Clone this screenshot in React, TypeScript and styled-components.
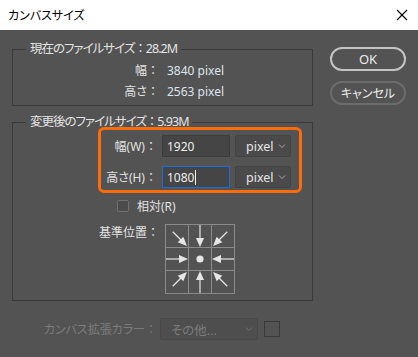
import React from "react";
import styled, { createGlobalStyle } from "styled-components";

const Global = createGlobalStyle`
  html, body { margin: 0; padding: 0; background: #535353; }
  body {
    font-family: "Noto Sans", "Noto Sans CJK JP", sans-serif;
    font-feature-settings: "palt" 1;
    font-size: 12px;
    color: #e2e2e2;
  }
  * { box-sizing: border-box; }
`;

const Window = styled.div`
  width: 418px;
  height: 357px;
  background: #535353;
  display: flex;
  flex-direction: column;
`;

const TitleBar = styled.div`
  height: 30px;
  background: #ffffff;
  color: #000;
  display: flex;
  align-items: center;
  justify-content: space-between;
  padding: 0 10px 0 8px;
  font-size: 12px;
`;

const Body = styled.div`
  display: flex;
  padding: 10px 0 0 12px;
  gap: 17px;
`;

const MainCol = styled.div`
  width: 301px;
  display: flex;
  flex-direction: column;
`;

const Group = styled.fieldset<{ $mt?: number; $pb: number }>`
  margin: ${(p) => p.$mt ?? 0}px 0 0 0;
  padding: 0 0 ${(p) => p.$pb}px 0;
  min-width: 0;
  border: 1px solid #3a3a3a;
  border-radius: 0;
`;

const Legend = styled.legend`
  margin-left: 13px;
  padding: 0 4px;
  line-height: 18px;
  font-size: 12.5px;
  letter-spacing: -1px;
  color: #e4e4e4;
`;

const Colon = styled.span`
  font-feature-settings: normal;
`;

const InfoGrid = styled.div`
  display: grid;
  grid-template-columns: 146px auto;
  column-gap: 8px;
  padding-top: 2px;
`;

const InfoLabel = styled.div`
  text-align: right;
  line-height: 21px;
  white-space: nowrap;
`;

const InfoValue = styled.div`
  line-height: 21px;
  color: #dde4ec;
`;

const Highlight = styled.div`
  margin: -4px 0 0 85px;
  width: 204px;
  border: 3px solid #ff6c0a;
  border-radius: 6px;
  padding: 5px 8px 2px 2px;
  display: grid;
  grid-template-columns: 54px 68px 56px;
  column-gap: 5px;
  row-gap: 9px;
  align-items: center;
`;

const FieldLabel = styled.div`
  display: flex;
  justify-content: flex-end;
  white-space: nowrap;
`;

const TextInput = styled.div<{ $focus?: boolean }>`
  height: 22px;
  background: #454545;
  border: 1px solid ${(p) => (p.$focus ? "#1b6fd6" : "#3b3b3b")};
  display: flex;
  align-items: center;
  padding-left: 4px;
  color: #eeeeee;
`;

const Caret = styled.span`
  display: inline-block;
  width: 1px;
  height: 15px;
  background: #f0f0f0;
  margin-left: 1px;
`;

const Select = styled.div<{ $disabled?: boolean; $w: number }>`
  width: ${(p) => p.$w}px;
  height: 22px;
  background: ${(p) => (p.$disabled ? "#4e4e4e" : "#4a4a4a")};
  border: 1px solid ${(p) => (p.$disabled ? "#484848" : "#424242")};
  border-radius: 2px;
  display: flex;
  align-items: center;
  justify-content: space-between;
  padding: 0 4px 0 10px;
  font-size: 12.5px;
  color: ${(p) => (p.$disabled ? "#7c7c7c" : "#e6e6e6")};
`;

const CheckRow = styled.div`
  display: flex;
  align-items: center;
  gap: 8px;
  margin: 4px 0 0 104px;
  height: 17px;
`;

const CheckBox = styled.span`
  width: 12px;
  height: 12px;
  border: 1px solid #727272;
  background: #4b4b4b;
  border-radius: 2px;
`;

const AnchorRow = styled.div`
  display: flex;
  margin-top: 10px;
  gap: 6px;
`;

const AnchorLabel = styled.div`
  width: 146px;
  text-align: right;
  line-height: 18px;
`;

const AnchorGrid = styled.div`
  display: grid;
  grid-template-columns: repeat(3, 22px);
  grid-template-rows: repeat(3, 22px);
  gap: 1px;
  padding: 1px;
  background: #8a8a8a;
  width: 70px;
  height: 70px;
`;

const AnchorCell = styled.div`
  background: #535353;
  display: flex;
  align-items: center;
  justify-content: center;
`;

const ColorRow = styled.div`
  display: flex;
  align-items: center;
  margin-top: 17px;
  gap: 3px;
  color: #7c7c7c;
`;

const ColorLabel = styled.div`
  width: 145px;
  text-align: right;
  white-space: nowrap;
`;

const Swatch = styled.span`
  width: 16px;
  height: 16px;
  border: 1px solid #3a3a3a;
  background: #535353;
  margin-left: 3px;
`;

const ButtonCol = styled.div`
  display: flex;
  flex-direction: column;
  gap: 10px;
  padding-top: 7px;
`;

const Button = styled.button<{ $primary?: boolean }>`
  width: 76px;
  height: 24px;
  border-radius: 12px;
  border: 2px solid ${(p) => (p.$primary ? "#c4c4c4" : "#6c6c6c")};
  background: #535353;
  color: #ececec;
  font-family: "Noto Sans", "Noto Sans CJK JP", sans-serif;
  font-feature-settings: "palt" 1;
  font-size: ${(p) => (p.$primary ? 13 : 12)}px;
  padding: 0;
  display: flex;
  align-items: center;
  justify-content: center;
`;

const Chevron = ({ color = "#a8a8a8" }: { color?: string }) => (
  <svg width="8" height="6" viewBox="0 0 8 6">
    <polyline points="1,1.5 4,4.5 7,1.5" fill="none" stroke={color} strokeWidth="1" />
  </svg>
);

const CloseIcon = () => (
  <svg width="12" height="12" viewBox="0 0 12 12">
    <line x1="1" y1="1" x2="11" y2="11" stroke="#000" strokeWidth="1.1" />
    <line x1="11" y1="1" x2="1" y2="11" stroke="#000" strokeWidth="1.1" />
  </svg>
);

const Arrow = ({ angle, diag }: { angle: number; diag?: boolean }) => {
  const a = diag ? -6 : -11;
  const b = diag ? 14 : 11;
  const h = 9;
  return (
    <svg width="22" height="22" viewBox="-11 -11 22 22" overflow="visible">
      <g transform={`rotate(${angle})`}>
        <line x1="0" y1={a} x2="0" y2={b - h + 1} stroke="#e6e6e6" strokeWidth="1.2" />
        <polygon points={`-4,${b - h} 4,${b - h} 0,${b}`} fill="#e6e6e6" />
      </g>
    </svg>
  );
};

const Dot = () => (
  <svg width="22" height="22" viewBox="-11 -11 22 22">
    <circle cx="0" cy="0" r="3.6" fill="#e6e6e6" />
  </svg>
);

const anchors: { angle: number; diag?: boolean; dot?: boolean }[] = [
  { angle: -45, diag: true },
  { angle: 0 },
  { angle: 45, diag: true },
  { angle: -90 },
  { angle: 0, dot: true },
  { angle: 90 },
  { angle: -135, diag: true },
  { angle: 180 },
  { angle: 135, diag: true },
];

export default function App() {
  return (
    <Window>
      <Global />
      <TitleBar>
        <span>カンバスサイズ</span>
        <CloseIcon />
      </TitleBar>
      <Body>
        <MainCol>
          <Group $pb={3}>
            <Legend>
              現在のファイルサイズ<Colon>：</Colon>28.2M
            </Legend>
            <InfoGrid>
              <InfoLabel>
                幅<Colon>：</Colon>
              </InfoLabel>
              <InfoValue>3840 pixel</InfoValue>
              <InfoLabel>
                高さ<Colon>：</Colon>
              </InfoLabel>
              <InfoValue>2563 pixel</InfoValue>
            </InfoGrid>
          </Group>
          <Group $mt={7} $pb={6}>
            <Legend>
              変更後のファイルサイズ<Colon>：</Colon>5.93M
            </Legend>
            <Highlight>
              <FieldLabel>
                幅(W)<Colon>：</Colon>
              </FieldLabel>
              <TextInput>1920</TextInput>
              <Select $w={56}>
                <span>pixel</span>
                <Chevron />
              </Select>
              <FieldLabel>
                高さ(H)<Colon>：</Colon>
              </FieldLabel>
              <TextInput $focus>
                1080
                <Caret />
              </TextInput>
              <Select $w={56}>
                <span>pixel</span>
                <Chevron />
              </Select>
            </Highlight>
            <CheckRow>
              <CheckBox />
              <span>相対(R)</span>
            </CheckRow>
            <AnchorRow>
              <AnchorLabel>
                基準位置<Colon>：</Colon>
              </AnchorLabel>
              <AnchorGrid>
                {anchors.map((a, i) => (
                  <AnchorCell key={i}>{a.dot ? <Dot /> : <Arrow angle={a.angle} diag={a.diag} />}</AnchorCell>
                ))}
              </AnchorGrid>
            </AnchorRow>
          </Group>
          <ColorRow>
            <ColorLabel>
              カンバス拡張カラー<Colon>：</Colon>
            </ColorLabel>
            <Select $disabled $w={98}>
              <span>その他...</span>
              <Chevron color="#6e6e6e" />
            </Select>
            <Swatch />
          </ColorRow>
        </MainCol>
        <ButtonCol>
          <Button $primary>OK</Button>
          <Button>キャンセル</Button>
        </ButtonCol>
      </Body>
    </Window>
  );
}
